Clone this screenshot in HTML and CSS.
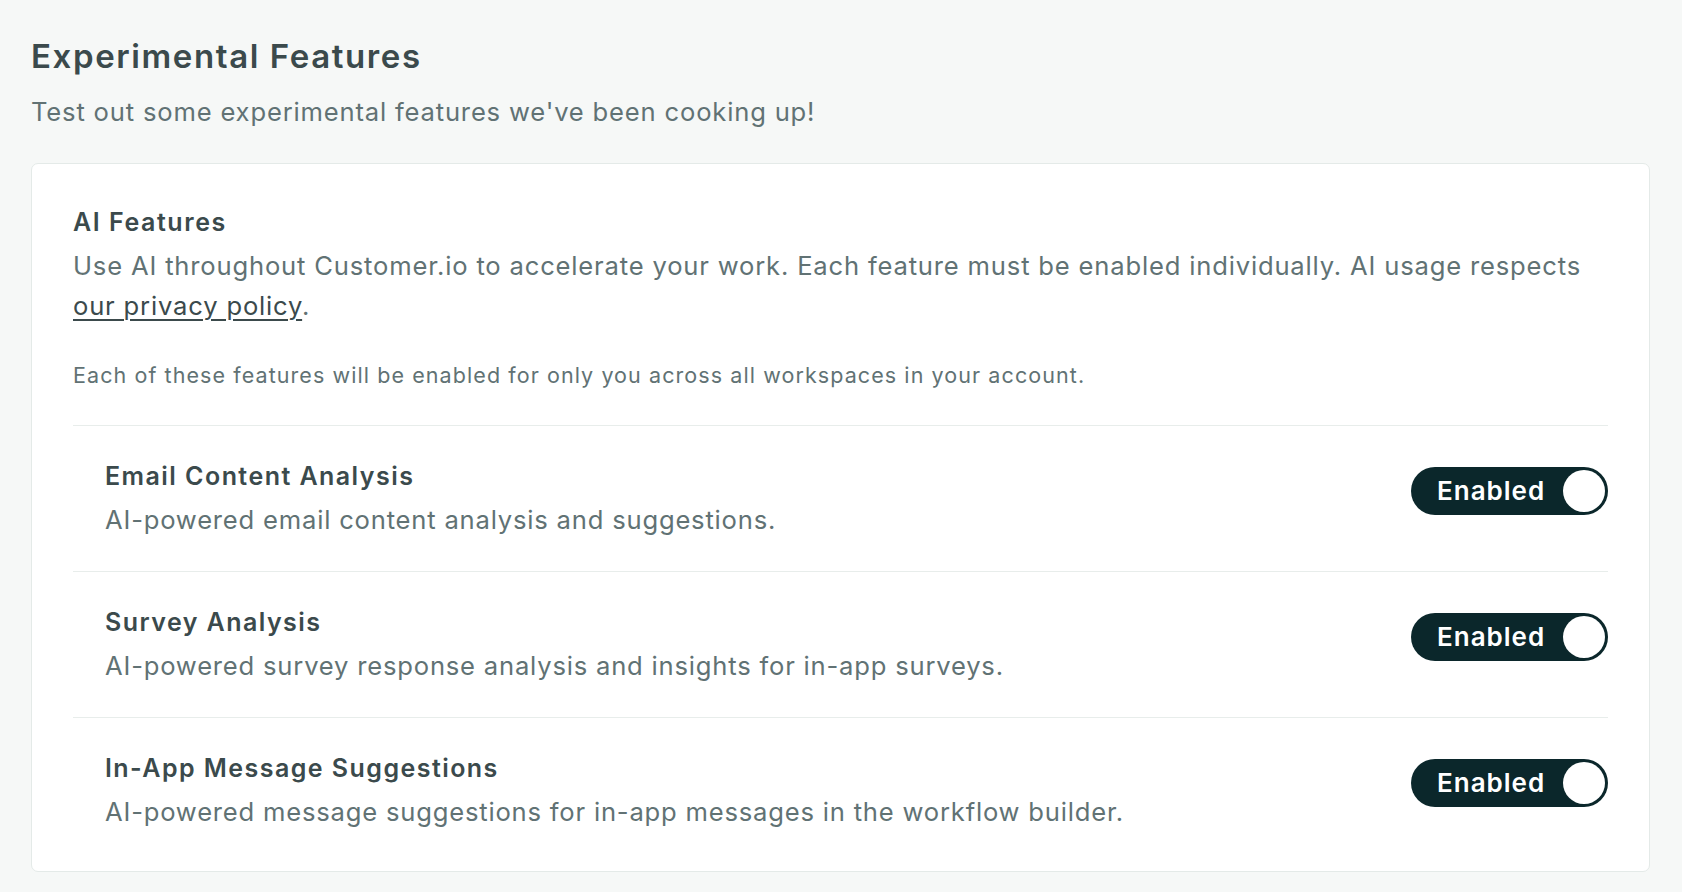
FILE: index.html
```html
<!DOCTYPE html>
<html lang="en">
<head>
<meta charset="utf-8">
<title>Experimental Features</title>
<link rel="stylesheet" href="styles.css">
</head>
<body>
<main class="page">
  <h1 class="page-title">Experimental Features</h1>
  <p class="page-subtitle">Test out some experimental features we've been cooking up!</p>

  <section class="card">
    <h2 class="card-title">AI Features</h2>
    <p class="card-desc">Use AI throughout Customer.io to accelerate your work. Each feature must be enabled individually. AI usage respects <a class="link" href="#">our privacy policy</a>.</p>
    <p class="card-note">Each of these features will be enabled for only you across all workspaces in your account.</p>

    <div class="feature-list">
      <div class="feature">
        <div class="feature-text">
          <div class="feature-title">Email Content Analysis</div>
          <div class="feature-desc">AI-powered email content analysis and suggestions.</div>
        </div>
        <button class="toggle" type="button"><span class="toggle-label">Enabled</span><span class="toggle-knob"></span></button>
      </div>
      <div class="feature">
        <div class="feature-text">
          <div class="feature-title">Survey Analysis</div>
          <div class="feature-desc">AI-powered survey response analysis and insights for in-app surveys.</div>
        </div>
        <button class="toggle" type="button"><span class="toggle-label">Enabled</span><span class="toggle-knob"></span></button>
      </div>
      <div class="feature">
        <div class="feature-text">
          <div class="feature-title">In-App Message Suggestions</div>
          <div class="feature-desc">AI-powered message suggestions for in-app messages in the workflow builder.</div>
        </div>
        <button class="toggle" type="button"><span class="toggle-label">Enabled</span><span class="toggle-knob"></span></button>
      </div>
    </div>
  </section>
</main>
</body>
</html>
```

FILE: styles.css
```css
* { box-sizing: border-box; }

html, body {
  margin: 0;
  padding: 0;
  background: #f6f8f7;
}

body {
  font-family: Inter, "Noto Sans", "Liberation Sans", sans-serif;
  color: #3b4a4c;
}

.page {
  padding: 35px 32px 20px 31px;
}

.page-title {
  margin: 0;
  font-size: 33px;
  line-height: 42px;
  font-weight: 600;
  color: #3b4a4c;
  letter-spacing: 1.6px;
}

.page-subtitle {
  margin: 17px 0 0;
  font-size: 25.6px;
  line-height: 36px;
  color: #617274;
  letter-spacing: 0.82px;
}

.card {
  margin-top: 33px;
  background: #ffffff;
  border: 1px solid #e4eae8;
  border-radius: 7px;
  padding: 40px 41px 8px 41px;
}

.card-title {
  margin: 0;
  font-size: 25px;
  line-height: 36px;
  font-weight: 600;
  color: #3b4a4c;
  letter-spacing: 1.55px;
}

.card-desc {
  margin: 6px 0 0;
  font-size: 25.6px;
  line-height: 40px;
  color: #617274;
  letter-spacing: 0.82px;
}

.link {
  color: #3b4a4c;
  text-decoration: underline;
  text-underline-offset: 4px;
  text-decoration-thickness: 1.5px;
}

.card-note {
  margin: 33px 0 0;
  font-size: 21.5px;
  line-height: 32px;
  color: #617274;
  letter-spacing: 1.08px;
}

.feature-list {
  margin-top: 34px;
}

.feature {
  display: flex;
  align-items: flex-start;
  justify-content: space-between;
  border-top: 1px solid #e8edeb;
  padding: 32px 0 31px 32px;
}

.feature-text {
  display: flex;
  flex-direction: column;
  gap: 6px;
}

.feature-title {
  font-size: 25px;
  line-height: 36px;
  font-weight: 600;
  color: #3b4a4c;
  letter-spacing: 1.45px;
}

.feature-desc {
  font-size: 25.6px;
  line-height: 40px;
  color: #617274;
  letter-spacing: 0.8px;
}

.toggle {
  margin-top: 9px;
  flex: none;
  display: flex;
  align-items: center;
  width: 197px;
  height: 48px;
  padding: 0 3px 0 26px;
  border: none;
  border-radius: 24px;
  background: #0b272b;
  font-family: inherit;
  cursor: pointer;
}

.toggle-label {
  font-size: 26px;
  font-weight: 600;
  color: #ffffff;
  line-height: 1;
  letter-spacing: 1px;
}

.toggle-knob {
  margin-left: auto;
  width: 42px;
  height: 42px;
  border-radius: 50%;
  background: #ffffff;
}
```
